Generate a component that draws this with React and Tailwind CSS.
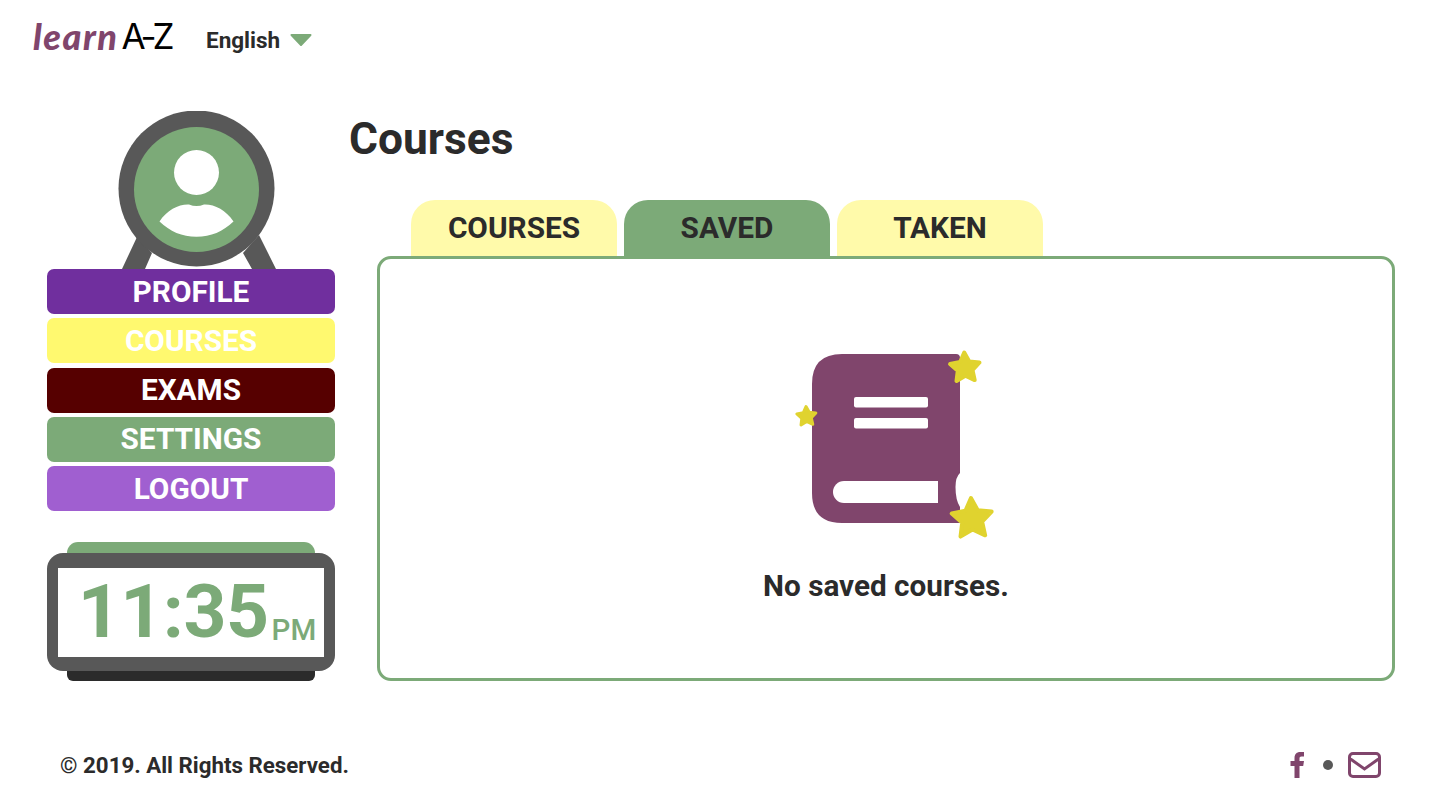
const menuItems = [
  { label: 'PROFILE', className: 'bg-[#702f9e]' },
  { label: 'COURSES', className: 'bg-[#fff96f]' },
  { label: 'EXAMS', className: 'bg-[#560000]' },
  { label: 'SETTINGS', className: 'bg-[#7caa78]' },
  { label: 'LOGOUT', className: 'bg-[#a05fd0]' },
];

const tabs = [
  { label: 'COURSES', className: 'bg-[#fffaaa]' },
  { label: 'SAVED', className: 'bg-[#7caa78]' },
  { label: 'TAKEN', className: 'bg-[#fffaaa]' },
];

const starPoints = (cx, cy, r) => {
  const points = [];
  for (let i = 0; i < 10; i++) {
    const radius = i % 2 === 0 ? r : r * 0.5;
    const angle = (Math.PI / 5) * i - Math.PI / 2 - 0.05;
    points.push(`${cx + radius * Math.cos(angle)},${cy + radius * Math.sin(angle)}`);
  }
  return points.join(' ');
};

const Avatar = () => (
  <svg width="288" height="158" viewBox="0 0 288 158" className="block">
    <path d="M75 158 L98 158 L105 142 L90 126 Z M229 158 L205 158 L196 142 L212 124 Z" fill="#585858" />
    <circle cx="149.5" cy="77.5" r="78" fill="#585858" />
    <circle cx="149.5" cy="78.5" r="62.5" fill="#7caa78" />
    <circle cx="149.5" cy="61.5" r="22.5" fill="#fff" />
    <path d="M112.5 110.5 C120 99 132 93 142 93.5 C147 95.5 152 95.5 157 93.5 C167 93 179 99 186.5 110.5 C176 120.5 164 125.8 149.5 125.8 C135 125.8 123 120.5 112.5 110.5 Z" fill="#fff" />
  </svg>
);

const Clock = () => (
  <div className="flex flex-col items-center">
    <div className="h-[11px] w-[248px] rounded-t-[12px] bg-[#7caa78]" />
    <div className="h-[118px] w-full rounded-[16px] bg-[#585858] px-[11px] pt-[15px] pb-[14px]">
      <div className="flex h-[89px] items-end justify-center bg-white pl-[12px] text-[#7caa78]">
        <span className="pb-[2px] text-[75px] leading-[88px] font-bold tracking-[-0.5px]">11:35</span>
        <span className="mb-[12px] ml-[3px] text-[29.5px] leading-[30px] font-medium">PM</span>
      </div>
    </div>
    <div className="h-[10px] w-[248px] rounded-b-[6px] bg-[#2b2b2b]" />
  </div>
);

const BookIcon = () => (
  <svg width="240" height="210" viewBox="-14 0 240 210" className="block">
    <path d="M62 14 H176 Q180 14 180 18 V133 Q175.5 137 175.5 147 Q175.5 160 180 167 V183 H62 Q32 183 32 153 V44 Q32 14 62 14 Z" fill="#80456c" />
    <rect x="74" y="57" width="74" height="10.5" rx="2" fill="#fff" />
    <rect x="74" y="78" width="74" height="10.5" rx="2" fill="#fff" />
    <path d="M64 141 H158 V163 H64 A11 11 0 0 1 64 141 Z" fill="#fff" />
    <polygon points={starPoints(185, 28, 15.5)} fill="#e0d32f" stroke="#e0d32f" strokeWidth="4" strokeLinejoin="round" />
    <polygon points={starPoints(26.5, 76.5, 10)} fill="#e0d32f" stroke="#e0d32f" strokeWidth="3" strokeLinejoin="round" />
    <polygon points={starPoints(192, 179, 21)} fill="#e0d32f" stroke="#e0d32f" strokeWidth="4" strokeLinejoin="round" />
  </svg>
);

const App = () => {
  return (
    <div className="flex h-[810px] w-[1440px] flex-col overflow-hidden bg-white font-['Roboto',sans-serif] text-[#2b2b2b]">
      {/* Header */}
      <header className="flex h-[80px] shrink-0 items-center pl-[33px]">
        <div className="flex w-[173px] items-center pb-[8px] leading-none">
          <span className="font-['Lato',sans-serif] text-[36px] font-black tracking-[1.5px] text-[#80456c] italic">learn</span>
          <span className="ml-[3px] font-['Inter',sans-serif] text-[35px] font-normal tracking-[-4px] text-black">A-Z</span>
        </div>
        <span className="pt-[1px] text-[22.5px] font-bold">English</span>
        <svg width="22" height="12" viewBox="0 0 22 12" className="ml-[10px]">
          <path d="M1.5 1 H20.5 L11 11 Z" fill="#7caa78" stroke="#7caa78" strokeWidth="2" strokeLinejoin="round" />
        </svg>
      </header>

      <div className="flex flex-1 pt-[31px] pl-[47px]">
        {/* Sidebar */}
        <aside className="flex w-[288px] shrink-0 flex-col">
          <Avatar />
          <nav className="flex flex-col gap-[4.25px]">
            {menuItems.map((item) => (
              <div
                key={item.label}
                className={`flex h-[45px] items-center justify-center rounded-[7px] pt-[1px] text-[29.8px] font-bold text-white ${item.className}`}
              >
                {item.label}
              </div>
            ))}
          </nav>
          <div className="mt-[31px]">
            <Clock />
          </div>
        </aside>

        {/* Main */}
        <main className="ml-[15px] flex flex-1 flex-col">
          <h1 className="-ml-[1px] h-[58px] text-[44.3px] leading-[56px] font-bold">Courses</h1>
          <div className="flex gap-[7px] pt-[31px] pl-[61px]">
            {tabs.map((tab) => (
              <div
                key={tab.label}
                className={`flex h-[56px] w-[206px] items-center justify-center rounded-t-[24px] pt-[1px] text-[29.8px] font-bold ${tab.className}`}
              >
                {tab.label}
              </div>
            ))}
          </div>
          <section className="ml-[27px] flex h-[425px] w-[1018px] flex-col items-center rounded-[14px] border-[3px] border-[#7caa78] pt-[81px]">
            <BookIcon />
            <p className="mt-[16px] text-[29.7px] leading-[40px] font-bold">No saved courses.</p>
          </section>
        </main>
      </div>

      {/* Footer */}
      <footer className="flex h-[90px] shrink-0 items-start justify-between pt-[25px] pr-[59px] pl-[60px]">
        <span className="text-[22.3px] leading-[40px] font-bold">© 2019. All Rights Reserved.</span>
        <div className="flex items-center pt-[7px]">
          <svg width="15" height="26" viewBox="0 0 15 26">
            <path d="M4.5 26 V14 H0.5 V9 H4.5 V6 C4.5 2 7 0 10 0 H14 V4.5 H11.5 C10 4.5 9.5 5.2 9.5 6.5 V9 H14 L13.2 14 H9.5 V26 Z" fill="#80456c" />
          </svg>
          <span className="ml-[18px] size-[10px] rounded-full bg-[#585858]" />
          <svg width="33" height="26" viewBox="0 0 33 26" fill="none" className="ml-[15px]">
            <rect x="1.5" y="1.5" width="30" height="23" rx="3.5" stroke="#80456c" strokeWidth="3" />
            <path d="M2.5 7 L16.5 17 L30.5 7" stroke="#80456c" strokeWidth="3" />
          </svg>
        </div>
      </footer>
    </div>
  );
};

export default App;
